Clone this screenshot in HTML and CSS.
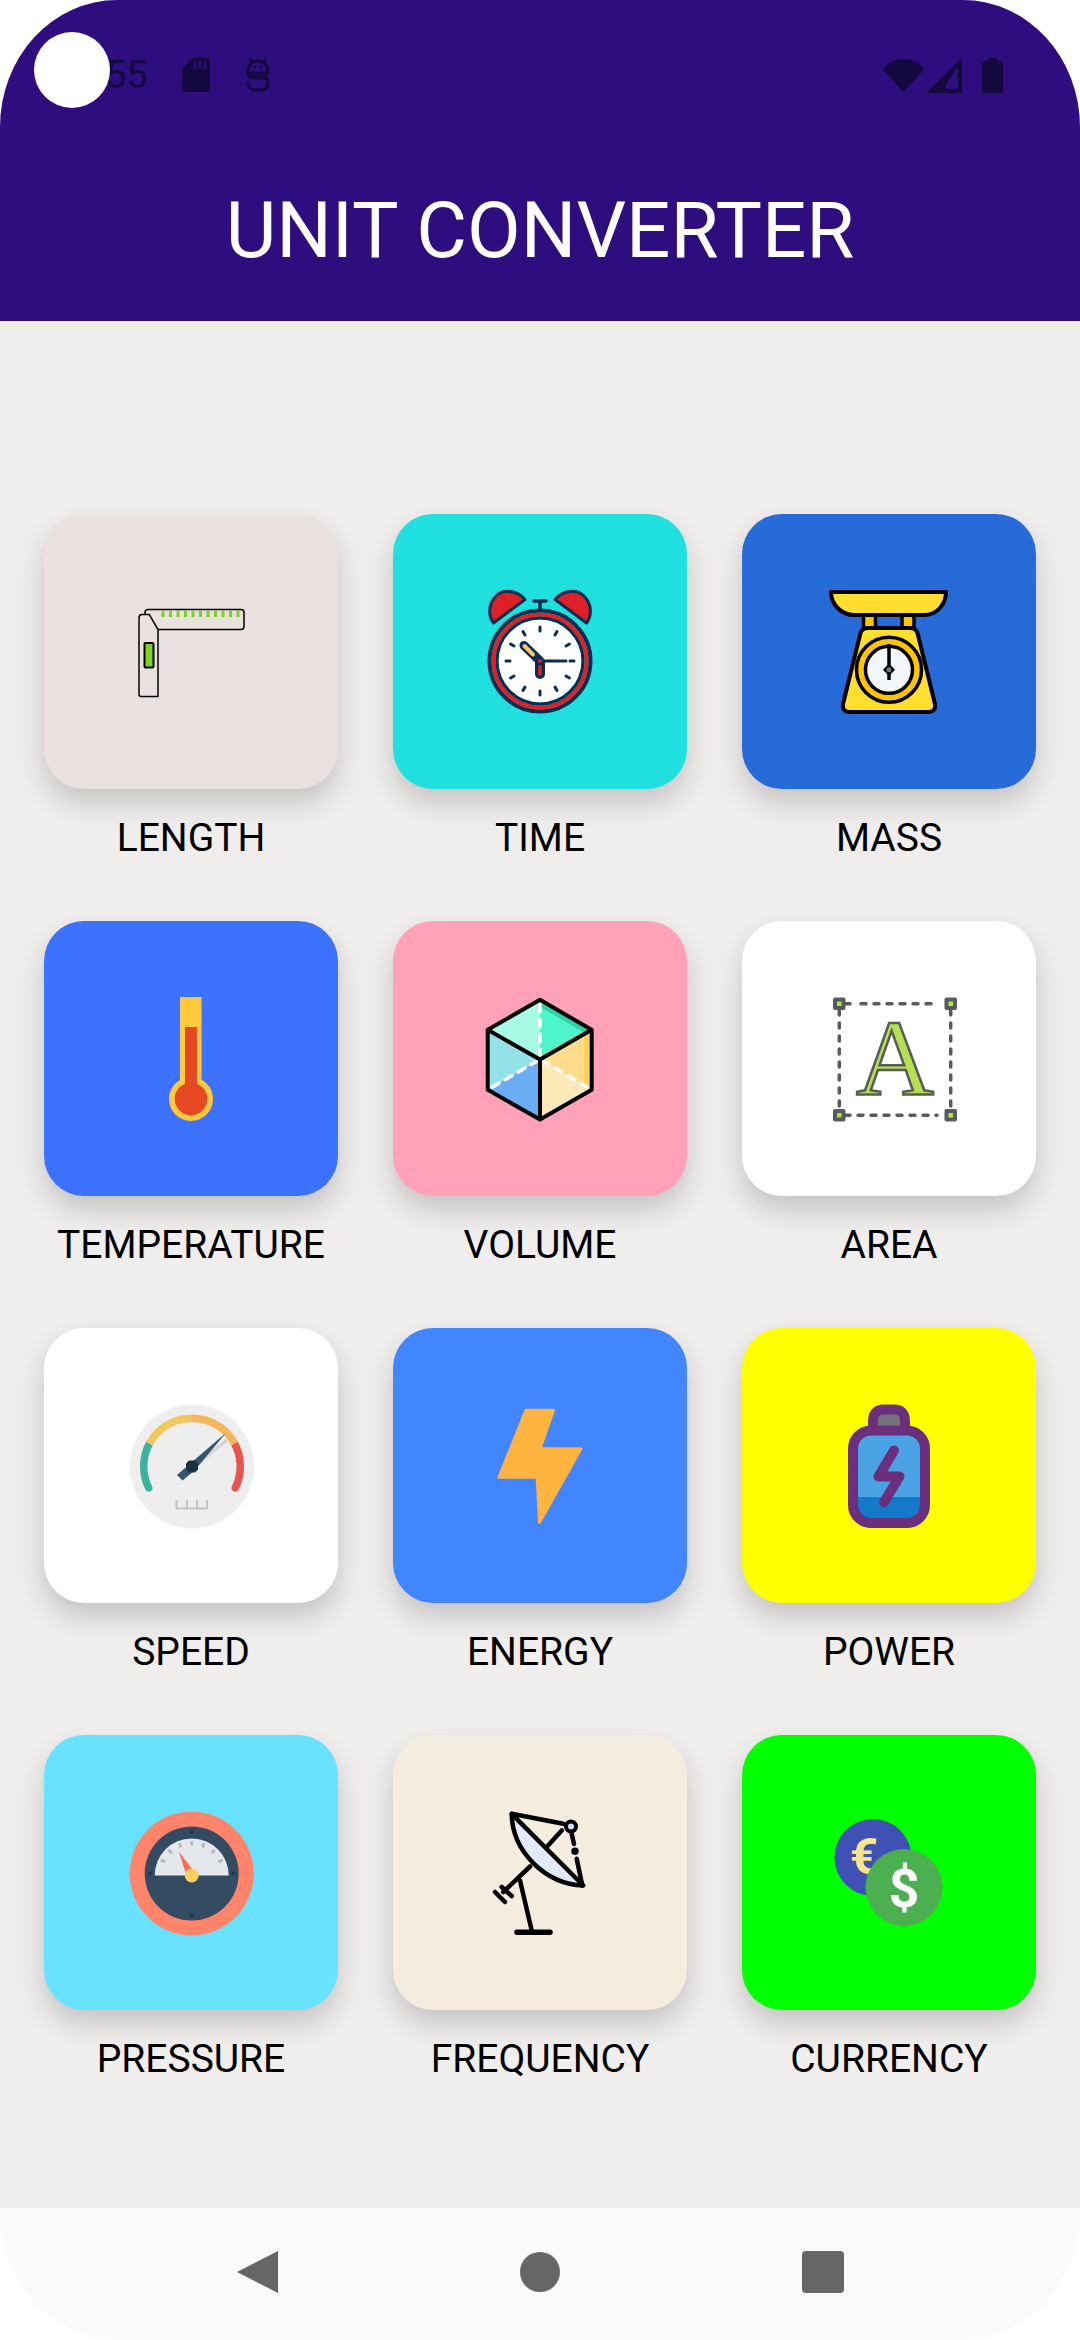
FILE: index.html
```html
<!DOCTYPE html>
<html lang="en">
<head>
    <meta charset="UTF-8">
    <meta name="viewport" content="width=device-width, initial-scale=1.0">
    <title>Unit Converter</title>
    <link rel="stylesheet" href="styles.css">
</head>
<body>
<div class="phone">
    <header class="header">
        <div class="status">
            <span class="camera"></span>
            <span class="status-time">55</span>
            <svg class="sd-icon" width="28" height="34" viewBox="0 0 28 34"><path d="M10 0H25a3 3 0 0 1 3 3V31a3 3 0 0 1-3 3H3a3 3 0 0 1-3-3V11Z" fill="#14093f"/><path d="M13 3v8M18 3v8M23 3v8" stroke="#2f0f7f" stroke-width="2.5"/></svg>
            <svg class="debug-icon" width="24" height="34" viewBox="0 0 24 34" fill="none" stroke="#14093f" stroke-width="3"><path d="M2 13C2 7 6 3 12 3s10 4 10 10v2H2Z"/><path d="M4 1l3 4M20 1l-3 4M8 9h2M14 9h2"/><path d="M22 18H6a4 4 0 0 0 0 1M2 15v1a4 4 0 0 0 4 4h12a4 4 0 0 1 4 4v2a6 6 0 0 1-6 6h-8a6 6 0 0 1-6-6v-2"/></svg>
            <span class="status-right">
                <svg width="41" height="33" viewBox="0 0 41 33"><path d="M20.500 33 0 10.500C4 4 12 0 20.500 0S37 4 41 10.500Z" fill="#14093f" transform="translate(0 0)"/></svg>
                <svg width="36" height="35" viewBox="0 0 36 35"><path d="M36 0V35H0ZM32 12 20 31H32Z" fill="#14093f" fill-rule="evenodd"/><path d="M32 8 20 27V31H32Z" fill="#2f0f7f"/></svg>
                <svg class="battery-icon" width="21" height="35" viewBox="0 0 21 35"><path d="M6 0h9V3h4a2 2 0 0 1 2 2V33a2 2 0 0 1-2 2H2a2 2 0 0 1-2-2V5A2 2 0 0 1 2 3H6Z" fill="#14093f"/></svg>
            </span>
        </div>
        <h1 class="title">UNIT CONVERTER</h1>
    </header>

    <main class="content">
        <div class="grid">
            <div class="item">
                <div class="card card-length">
                    <svg class="icon" viewBox="0 0 160 160" fill="none" stroke="#000" stroke-width="1.500">
                        <path d="M34 42.500V40.500Q34 37.500 37 37.500H130Q133 37.500 133 40.500V54.500Q133 57.500 130 57.500H47"/>
                        <path d="M28 46Q28 42.500 31 42.500H38.300L47 57.500V124.500H30Q28 124.500 28 122.500Z"/>
                        <rect x="33.500" y="71" width="9" height="24.500" rx="1" fill="#7ed321" stroke-width="2"/>
                        <path d="M52 38.500V45M59.500 38.500V45M67 38.500V45M74.500 38.500V45M82 38.500V45M89.500 38.500V45M97 38.500V45M104.500 38.500V45M112 38.500V45M119.500 38.500V45M127 38.500V45" stroke="#7ed321" stroke-width="3"/>
                    </svg>
                </div>
                <div class="label">LENGTH</div>
            </div>
            <div class="item">
                <div class="card card-time">
                    <svg class="icon" viewBox="0 0 160 160" fill="none" stroke="#0a2d50">
                        <path d="M33.500 51 65 27.500C58 19 44 16 36 24 28 32 28 44 33.500 51Z" fill="#de2126" stroke-width="3" stroke-linejoin="round"/>
                        <path d="M126.500 51 95 27.500C102 19 116 16 124 24 132 32 132 44 126.500 51Z" fill="#de2126" stroke-width="3" stroke-linejoin="round"/>
                        <path d="M80 30V37M74 29H86" stroke-width="3.500" stroke-linecap="round"/>
                        <circle cx="80" cy="89" r="41.500" fill="#fff" stroke="none"/>
                        <circle cx="80" cy="89" r="50.500" stroke-width="4"/>
                        <circle cx="80" cy="89" r="46.500" stroke="#de2126" stroke-width="4"/>
                        <circle cx="80" cy="89" r="43" stroke-width="3"/>
                        <g stroke-width="3" stroke-linecap="round">
                            <path d="M80 55V59"/>
                            <path d="M80 55V59" transform="rotate(30 80 89)"/>
                            <path d="M80 55V59" transform="rotate(60 80 89)"/>
                            <path d="M80 55V59" transform="rotate(90 80 89)"/>
                            <path d="M80 55V59" transform="rotate(120 80 89)"/>
                            <path d="M80 55V59" transform="rotate(150 80 89)"/>
                            <path d="M80 55V59" transform="rotate(180 80 89)"/>
                            <path d="M80 55V59" transform="rotate(210 80 89)"/>
                            <path d="M80 55V59" transform="rotate(240 80 89)"/>
                            <path d="M80 55V59" transform="rotate(270 80 89)"/>
                            <path d="M80 55V59" transform="rotate(300 80 89)"/>
                            <path d="M80 55V59" transform="rotate(330 80 89)"/>
                        </g>
                        <path d="M80 89H106" stroke-width="3" stroke-linecap="round"/>
                        <path d="M80 91V102" stroke-width="10" stroke-linecap="round"/>
                        <path d="M80 92V102" stroke="#de2126" stroke-width="3.500" stroke-linecap="round"/>
                        <path d="M64 73.500 80 89" stroke-width="9" stroke-linecap="round"/>
                        <path d="M64.500 74 73 82.500" stroke="#fbc66b" stroke-width="4" stroke-linecap="round"/>
                        <circle cx="80" cy="89" r="2" fill="#de2126" stroke="none"/>
                    </svg>
                </div>
                <div class="label">TIME</div>
            </div>
            <div class="item">
                <div class="card card-mass">
                    <svg class="icon" viewBox="0 0 160 160" stroke="#000" stroke-linejoin="round">
                        <rect x="54.500" y="42" width="12" height="15" fill="#fdc500" stroke-width="3.500"/>
                        <rect x="93" y="42" width="12" height="15" fill="#fdc500" stroke-width="3.500"/>
                        <path d="M22 20H137C137 32 128 43 115 43H45C32 43 22 32 22 20Z" fill="#ffde2e" stroke-width="4"/>
                        <path d="M59 56H101Q108 56 109 63L126 132Q127 140 119 140H41Q33 140 34 132L51 63Q52 56 59 56Z" fill="#ffde2e" stroke-width="4"/>
                        <circle cx="80" cy="97.800" r="32.500" fill="#fdc500" stroke-width="3.500"/>
                        <circle cx="80" cy="97.800" r="23.500" fill="#f3f6f9" stroke-width="3.500"/>
                        <path d="M80 72V108" stroke-width="3.500" fill="none"/>
                        <path d="M80 91.500 86 97.800 80 104 74 97.800Z" fill="#000" stroke="none"/>
                        <circle cx="80" cy="97.800" r="2.500" fill="#6f7c85" stroke="none"/>
                    </svg>
                </div>
                <div class="label">MASS</div>
            </div>

            <div class="item">
                <div class="card card-temperature">
                    <svg class="icon" viewBox="0 0 160 160">
                        <rect x="69" y="18" width="21.500" height="95" fill="#ffc93c"/>
                        <circle cx="80" cy="120" r="22" fill="#ffc93c"/>
                        <rect x="74" y="48" width="12" height="62" fill="#e64a25"/>
                        <circle cx="80" cy="120" r="16.300" fill="#e64a25"/>
                    </svg>
                </div>
                <div class="label">TEMPERATURE</div>
            </div>
            <div class="item">
                <div class="card card-volume">
                    <svg class="icon" viewBox="0 0 160 160">
                        <path d="M80 20.800 27.700 50.800 80 80.500Z" fill="#a8fbe4"/>
                        <path d="M80 20.800 131.700 50.800 80 80.500Z" fill="#4ef5cb"/>
                        <path d="M80 20.800 131.700 50.800 125 54 80 28Z" fill="#2cd3ab"/>
                        <path d="M27.700 50.800 80 80.500 27.700 110.800Z" fill="#92e2e8"/>
                        <path d="M27.700 110.800 80 80.500V140.500Z" fill="#69adf3"/>
                        <path d="M80 80.500 131.700 50.800V110.800Z" fill="#ffdd8c"/>
                        <path d="M80 80.500 131.700 110.800 80 140.500Z" fill="#fee9b8"/>
                        <path d="M124 55.200 131.700 50.800V110.800L124 106.300Z" fill="#ffd257"/>
                        <g stroke="#fff" stroke-width="3.500" fill="none" stroke-linecap="round" stroke-dasharray="8 7">
                            <path d="M80 78V24"/>
                            <path d="M78 81.500 30 109.500"/>
                            <path d="M82 81.500 130 109.500"/>
                        </g>
                        <g stroke="#000" stroke-width="4" fill="none" stroke-linejoin="round">
                            <path d="M80 20.800 131.700 50.800V110.800L80 140.500 27.700 110.800V50.800Z"/>
                            <path d="M27.700 50.800 80 80.500 131.700 50.800M80 80.500V140.500"/>
                        </g>
                    </svg>
                </div>
                <div class="label">VOLUME</div>
            </div>
            <div class="item">
                <div class="card card-area">
                    <svg class="icon" viewBox="0 0 160 160">
                        <text class="area-letter" x="86" y="115.500" text-anchor="middle">A</text>
                        <g stroke="#565c5c" stroke-width="3.500" fill="none" stroke-linecap="round">
                            <path d="M36 24.800H44M52 24.800H128" stroke-dasharray="5 8"/>
                            <path d="M36 136.200H128" stroke-dasharray="5 8"/>
                            <path d="M30.300 31V130" stroke-dasharray="5 8"/>
                            <path d="M141.700 31V130" stroke-dasharray="5 8"/>
                        </g>
                        <g fill="#565c5c">
                            <rect x="24" y="18.500" width="12.500" height="12.500" rx="2"/>
                            <rect x="135.500" y="18.500" width="12.500" height="12.500" rx="2"/>
                            <rect x="24" y="130" width="12.500" height="12.500" rx="2"/>
                            <rect x="135.500" y="130" width="12.500" height="12.500" rx="2"/>
                        </g>
                        <g fill="#b7e051">
                            <rect x="28" y="22.500" width="4.500" height="4.500"/>
                            <rect x="139.500" y="22.500" width="4.500" height="4.500"/>
                            <rect x="28" y="134" width="4.500" height="4.500"/>
                            <rect x="139.500" y="134" width="4.500" height="4.500"/>
                        </g>
                    </svg>
                </div>
                <div class="label">AREA</div>
            </div>

            <div class="item">
                <div class="card card-speed">
                    <svg class="icon" viewBox="0 0 160 160" fill="none">
                        <circle cx="81" cy="80.500" r="62" fill="#eee"/>
                        <g stroke-width="7.500">
                            <path d="M37.700 101.800A48.300 48.300 0 0 1 38.300 57.800" stroke="#3cb39e" stroke-linecap="round"/>
                            <path d="M124.300 101.800A48.300 48.300 0 0 0 123.700 57.800" stroke="#e6564e" stroke-linecap="round"/>
                            <path d="M38.300 57.800A48.300 48.300 0 0 1 81 32.200" stroke="#f2c85c"/>
                            <path d="M81 32.200A48.300 48.300 0 0 1 123.700 57.800" stroke="#f5b65a"/>
                        </g>
                        <path d="M116 54 81 82" stroke="#d5d5d5" stroke-width="3.500"/>
                        <path d="M115 46.800 84 84 71.500 94.500 66 89 77 79.500Z" fill="#33566a"/>
                        <path d="M78 74.500H84L87 77.500V83.500L84 86.500H78L75 83.500V77.500Z" fill="#1c3240"/>
                        <path d="M65.500 114V122.500H96V114M76 114V122M86 114V122" stroke="#c4c4c4" stroke-width="2"/>
                    </svg>
                </div>
                <div class="label">SPEED</div>
            </div>
            <div class="item">
                <div class="card card-energy">
                    <svg class="icon" viewBox="0 0 160 160">
                        <path d="M66 24.300H93.500L80 62.700H121L79.500 136.300 77.200 91.300H39Z" fill="#ffb43f" stroke="#ffb43f" stroke-width="3" stroke-linejoin="round"/>
                    </svg>
                </div>
                <div class="label">ENERGY</div>
            </div>
            <div class="item">
                <div class="card card-power">
                    <svg class="icon" viewBox="0 0 160 160">
                        <path d="M64 44V35Q64 23.500 75 23.500H85Q96 23.500 96 35V44" fill="#757180" stroke="#6b2f7d" stroke-width="10"/>
                        <rect x="44" y="44.500" width="72" height="92.500" rx="18" fill="#4aa3e4"/>
                        <path d="M44 111H116V119Q116 137 98 137H62Q44 137 44 119Z" fill="#1479c8"/>
                        <rect x="44" y="44.500" width="72" height="92.500" rx="18" fill="none" stroke="#6b2f7d" stroke-width="10"/>
                        <path d="M85 64.500 69.500 90.500H90.500L75 116" fill="none" stroke="#6b2f7d" stroke-width="10" stroke-linecap="round" stroke-linejoin="round"/>
                    </svg>
                </div>
                <div class="label">POWER</div>
            </div>

            <div class="item">
                <div class="card card-pressure">
                    <svg class="icon" viewBox="0 0 160 160">
                        <circle cx="80.700" cy="80.500" r="62" fill="#ff8469"/>
                        <circle cx="80.700" cy="80.500" r="47" fill="#334c62"/>
                        <path d="M43.700 82.500A37 37 0 0 1 117.700 82.500Z" fill="#e4e7ec"/>
                        <g stroke="#b7b9bc" stroke-width="3">
                            <path d="M80.700 48V52.500" transform="rotate(-63 80.700 82.500)"/>
                            <path d="M80.700 48V52.500" transform="rotate(-42 80.700 82.500)"/>
                            <path d="M80.700 48V52.500" transform="rotate(-21 80.700 82.500)"/>
                            <path d="M80.700 48V52.500"/>
                            <path d="M80.700 48V52.500" transform="rotate(21 80.700 82.500)"/>
                            <path d="M80.700 48V52.500" transform="rotate(42 80.700 82.500)"/>
                            <path d="M80.700 48V52.500" transform="rotate(63 80.700 82.500)"/>
                        </g>
                        <g fill="#263a4b">
                            <rect x="78.700" y="36.500" width="4" height="4"/>
                            <rect x="36.800" y="78.500" width="4" height="4"/>
                            <rect x="120.700" y="78.500" width="4" height="4"/>
                            <rect x="78.700" y="120.500" width="4" height="4"/>
                        </g>
                        <path d="M67.700 58.200 84 80 76 84Z" fill="#ff6b53"/>
                        <circle cx="80.700" cy="82.500" r="7" fill="#ffd15c"/>
                    </svg>
                </div>
                <div class="label">PRESSURE</div>
            </div>
            <div class="item">
                <div class="card card-frequency">
                    <svg class="icon" viewBox="0 0 160 160" fill="none" stroke="#000" stroke-width="4.500" stroke-linecap="round" stroke-linejoin="round">
                        <path d="M51.700 20.800C52 58 85 91 123.300 92.500Z" fill="#e1e9f7"/>
                        <path d="M51.700 20.800 103.300 30.800M111.700 41 114 51M116.700 65.800 122.300 92.500"/>
                        <path d="M101.700 37.500 86.700 54M70 73.500 43.300 99M60 87.500 71.700 137.500"/>
                        <path d="M35 99 45 109M41.700 94 51.700 103" stroke-width="4.500"/>
                        <path d="M57 139.200H90" stroke-width="5.500"/>
                        <circle cx="111" cy="33.500" r="5" fill="#cfe0f5" stroke-width="4"/>
                        <circle cx="115" cy="58.200" r="1.500" fill="#000"/>
                    </svg>
                </div>
                <div class="label">FREQUENCY</div>
            </div>
            <div class="item">
                <div class="card card-currency">
                    <svg class="icon" viewBox="0 0 160 160">
                        <circle cx="64" cy="64.500" r="38.500" fill="#3f51b5"/>
                        <text class="euro-sign" x="55" y="81" text-anchor="middle">€</text>
                        <circle cx="95" cy="94.500" r="38.500" fill="#4caf50"/>
                        <text class="dollar-sign" x="95" y="114" text-anchor="middle">$</text>
                    </svg>
                </div>
                <div class="label">CURRENCY</div>
            </div>
        </div>
    </main>

    <nav class="navbar">
        <svg width="41" height="42" viewBox="0 0 41 42"><path d="M41 0V42L0 21Z" fill="#666"/></svg>
        <span class="nav-circle"></span>
        <span class="nav-square"></span>
    </nav>
</div>
</body>
</html>
```

FILE: styles.css
```css
html, body {
    margin: 0;
    padding: 0;
    background-color: #fff;
}
.phone {
    width: 1080px;
    height: 2340px;
    display: flex;
    flex-direction: column;
    overflow: hidden;
    border-radius: 117px / 127px;
    font-family: Roboto, "Liberation Sans", sans-serif;
}
.header {
    height: 321px;
    background-color: #2e0d7e;
    flex-shrink: 0;
}
.status {
    position: relative;
    height: 150px;
    padding: 0 77px 0 105px;
    box-sizing: border-box;
    display: flex;
    align-items: center;
}
.camera {
    position: absolute;
    left: 34px;
    top: 32px;
    width: 76px;
    height: 76px;
    border-radius: 50%;
    background-color: #fff;
}
.status-time {
    width: 44px;
    font-size: 38px;
    color: #14093f;
    margin-right: 33px;
}
.sd-icon {
    margin-right: 36px;
}
.status-right {
    margin-left: auto;
    display: flex;
    align-items: center;
    gap: 2px;
}
.battery-icon {
    margin-left: 18px;
}
.title {
    margin: 0;
    height: 161px;
    line-height: 161px;
    text-align: center;
    font-size: 78px;
    font-weight: 400;
    color: #fff;
}
.content {
    flex: 1;
    background-color: #f0eded;
    padding: 193px 44px 0;
}
.grid {
    display: grid;
    grid-template-columns: repeat(3, 294px);
    column-gap: 55px;
    row-gap: 60px;
}
.card {
    height: 275px;
    border-radius: 40px;
    display: flex;
    align-items: center;
    justify-content: center;
    box-shadow: 0 14px 28px rgba(0,0,0,0.18);
}
.icon {
    width: 160px;
    height: 160px;
}
.label {
    margin-top: 26px;
    line-height: 46px;
    font-size: 39px;
    text-align: center;
    color: #000;
    white-space: nowrap;
}
.card-length { background-color: #e9e0e0; }
.card-time { background-color: #1fdfdf; }
.card-mass { background-color: #266bd8; }
.card-temperature { background-color: #3d72ff; }
.card-volume { background-color: #ffa2b9; }
.card-area { background-color: #fff; }
.card-speed { background-color: #fff; }
.card-energy { background-color: #4286ff; }
.card-power { background-color: #ffff00; }
.card-pressure { background-color: #69e2ff; }
.card-frequency { background-color: #f5ece0; }
.card-currency { background-color: #00ff00; }
.area-letter {
    font-family: "Liberation Serif", serif;
    font-size: 108px;
    fill: #b7e051;
    stroke: #565c5c;
    stroke-width: 2.5px;
}
.euro-sign {
    font-size: 50px;
    font-weight: 700;
    fill: #f7e58a;
}
.dollar-sign {
    font-size: 54px;
    font-weight: 700;
    fill: #fff;
}
.navbar {
    height: 132px;
    padding-bottom: 4px;
    box-sizing: border-box;
    flex-shrink: 0;
    background-color: #fafafa;
    display: flex;
    align-items: center;
    justify-content: center;
    gap: 242px;
}
.nav-circle {
    width: 40px;
    height: 40px;
    border-radius: 50%;
    background-color: #666;
}
.nav-square {
    width: 42px;
    height: 42px;
    border-radius: 4px;
    background-color: #666;
}
```
